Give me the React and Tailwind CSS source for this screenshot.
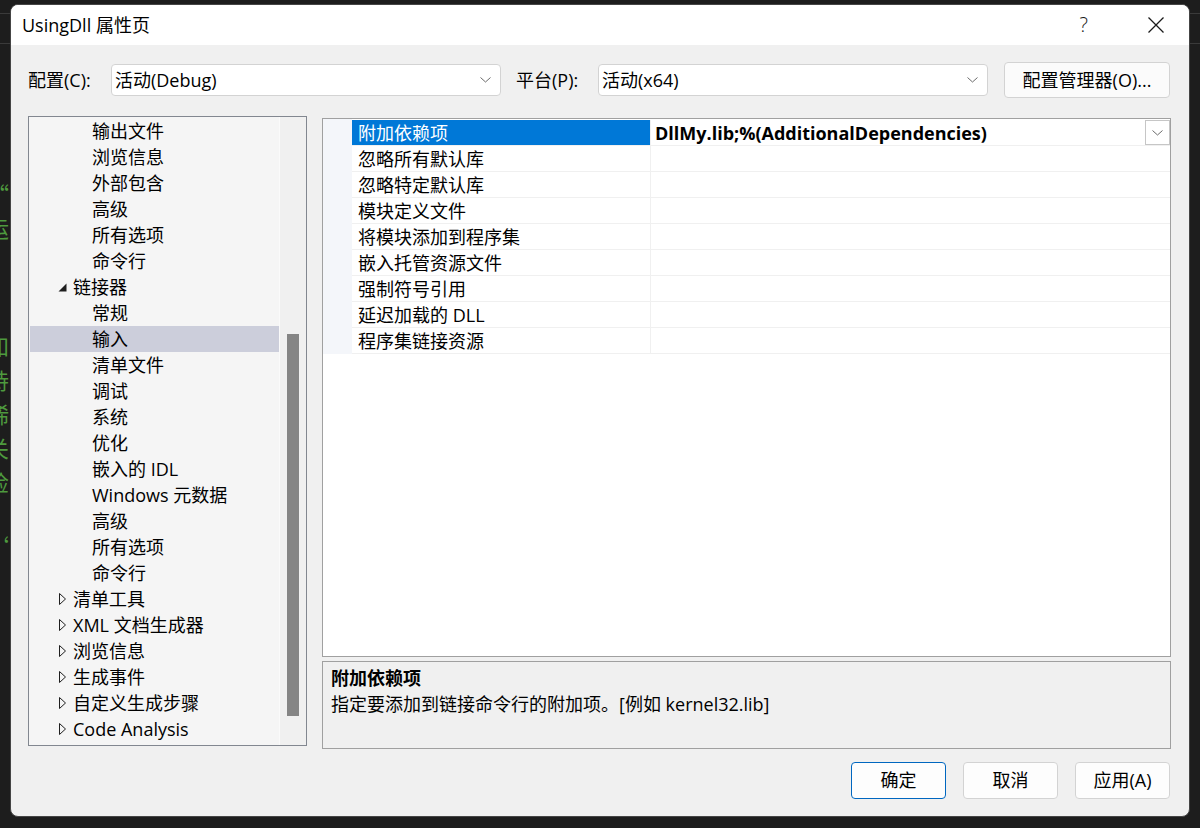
import React from 'react'

const font = { fontFamily: '"Open Sans", "Noto Sans CJK SC", sans-serif' }

const treeItems = [
  { t: '输出文件', l: 2 },
  { t: '浏览信息', l: 2 },
  { t: '外部包含', l: 2 },
  { t: '高级', l: 2 },
  { t: '所有选项', l: 2 },
  { t: '命令行', l: 2 },
  { t: '链接器', l: 1, open: true },
  { t: '常规', l: 2 },
  { t: '输入', l: 2, sel: true },
  { t: '清单文件', l: 2 },
  { t: '调试', l: 2 },
  { t: '系统', l: 2 },
  { t: '优化', l: 2 },
  { t: '嵌入的 IDL', l: 2 },
  { t: 'Windows 元数据', l: 2 },
  { t: '高级', l: 2 },
  { t: '所有选项', l: 2 },
  { t: '命令行', l: 2 },
  { t: '清单工具', l: 1 },
  { t: 'XML 文档生成器', l: 1 },
  { t: '浏览信息', l: 1 },
  { t: '生成事件', l: 1 },
  { t: '自定义生成步骤', l: 1 },
  { t: 'Code Analysis', l: 1 },
]

const props = [
  '附加依赖项',
  '忽略所有默认库',
  '忽略特定默认库',
  '模块定义文件',
  '将模块添加到程序集',
  '嵌入托管资源文件',
  '强制符号引用',
  '延迟加载的 DLL',
  '程序集链接资源',
]

// bits of the code editor showing behind the dialog
const bgGlyphs = [
  { t: '“', y: 182 },
  { t: '运', y: 216 },
  { t: '知', y: 334 },
  { t: '持', y: 368 },
  { t: '稀', y: 402 },
  { t: '关', y: 436 },
  { t: '检', y: 470 },
  { t: '‘', y: 534 },
]

function Chevron({ className = '' }) {
  return (
    <svg width="11" height="6" viewBox="0 0 11 6" className={className}>
      <polyline points="0.5,0.5 5.5,5 10.5,0.5" fill="none" stroke="#6b6b6b" strokeWidth="1" />
    </svg>
  )
}

function Combo({ value, width }) {
  return (
    <div className={`flex items-center h-[32px] bg-white border border-[#d3d3d3] rounded-[4px] pl-[3px] pr-[9px] ${width}`}>
      <span className="flex-1 pt-px">{value}</span>
      <Chevron />
    </div>
  )
}

function TreeRow({ item }) {
  return (
    <div className={`flex items-center h-[26px] leading-[26px] whitespace-nowrap ${item.sel ? 'bg-[#cccedb]' : ''} ${item.l === 2 ? 'pl-[62px]' : 'pl-[27px]'}`}>
      {item.l === 1 && (
        <span className="w-[16px] flex items-center">
          {item.open ? (
            <svg width="9" height="9" viewBox="0 0 9 9" className="ml-[1px] mt-[1px]">
              <polygon points="8.5,0.5 8.5,8.5 0.5,8.5" fill="#1e1e1e" />
            </svg>
          ) : (
            <svg width="8" height="12" viewBox="0 0 8 12" className="ml-[2px]">
              <polygon points="0.5,0.5 6.5,6 0.5,11.5" fill="none" stroke="#1e1e1e" strokeWidth="1" />
            </svg>
          )}
        </span>
      )}
      <span>{item.t}</span>
    </div>
  )
}

export default function App() {
  return (
    <div className="relative w-[1200px] h-[828px] bg-[#1d1d1d] overflow-hidden text-[18px] text-black" style={font}>
      {/* editor behind the dialog */}
      <div className="absolute left-0 right-0 top-[13px] h-px bg-[#3a3a3a]" />
      <div className="absolute left-0 right-0 top-[43px] h-px bg-[#3a3a3a]" />
      <div className="absolute left-[-13px] top-0 w-[24px] text-[22px] text-[#4e9a3e]" style={{ fontFamily: '"Noto Sans CJK SC", sans-serif' }}>
        <div className="absolute top-[86px] h-[14px] leading-[14px] text-[#c8a246] text-[16px]">v</div>
        {bgGlyphs.map((g, i) => (
          <div key={i} className="absolute h-[22px] leading-[22px]" style={{ top: g.y }}>
            {g.t}
          </div>
        ))}
      </div>

      {/* dialog window */}
      <div className="absolute left-[10px] top-[4px] w-[1180px] h-[813px] bg-[#f0f0f0] border border-[#454545] rounded-[8px] overflow-hidden flex flex-col">
        <div className="h-[40px] bg-white flex items-center pl-[11px] shrink-0">
          <span className="flex-1 text-[18px]">UsingDll 属性页</span>
          <span className="text-[20px] text-[#1a1a1a] mr-[60px] font-light">?</span>
          <svg width="16" height="16" viewBox="0 0 16 16" className="mr-[25px]">
            <path d="M0.5 0.5 L15.5 15.5 M15.5 0.5 L0.5 15.5" stroke="#1a1a1a" strokeWidth="1.3" />
          </svg>
        </div>

        <div className="flex flex-col pl-[17px]">
          {/* configuration row */}
          <div className="flex items-center h-[36px] mt-[17px]">
            <span className="w-[83px] pt-px">配置(C):</span>
            <Combo value="活动(Debug)" width="w-[390px]" />
            <span className="ml-[15px] w-[82px] pt-px">平台(P):</span>
            <Combo value="活动(x64)" width="w-[390px]" />
            <button className="ml-[16px] w-[166px] h-[36px] bg-[#fbfbfb] border border-[#d3d3d3] rounded-[4px]">
              配置管理器(O)...
            </button>
          </div>

          {/* main */}
          <div className="flex items-start mt-[18px] h-[632px]">
            {/* tree */}
            <div className="w-[279px] h-[630px] border border-[#828790] bg-[#f5f5f5] flex">
              <div className="flex-1 pt-px pl-px overflow-hidden">
                {treeItems.map((it, i) => (
                  <TreeRow key={i} item={it} />
                ))}
              </div>
              <div className="w-[27px] bg-[#f0f0f0] border-l border-[#fafafa] pt-[217px] pl-[7px]">
                <div className="w-[12px] h-[382px] bg-[#858585]" />
              </div>
            </div>

            <div className="ml-[15px] w-[849px] mt-[2px] flex flex-col">
              {/* property grid */}
              <div className="h-[539px] border border-[#a0a0a0] bg-white">
                <div className="flex">
                  <div className="w-[29px] bg-[#f4f6fa]" />
                  <div className="flex-1 pt-px">
                    {props.map((p, i) => (
                      <div key={i} className="flex h-[26px] border-b border-[#f0f0f0] leading-[26px]">
                        <div className={`w-[299px] pl-[6px] border-r border-[#f0f0f0] whitespace-nowrap ${i === 0 ? 'bg-[#0078d7] text-white' : ''}`}>
                          {p}
                        </div>
                        <div className="flex-1 flex items-center pl-[4px]">
                          {i === 0 && (
                            <>
                              <span className="flex-1 font-bold pt-px">DllMy.lib;%(AdditionalDependencies)</span>
                              <div className="w-[25px] h-[25px] border border-[#c6c6c6] bg-white flex items-center justify-center">
                                <Chevron />
                              </div>
                            </>
                          )}
                        </div>
                      </div>
                    ))}
                  </div>
                </div>
              </div>

              {/* description */}
              <div className="mt-[4px] h-[88px] border border-[#a0a0a0] bg-[#f0f0f0] pl-[8px] pt-[3px] leading-[26px]">
                <div className="font-bold">附加依赖项</div>
                <div>指定要添加到链接命令行的附加项。[例如 kernel32.lib]</div>
              </div>
            </div>
          </div>

          {/* footer */}
          <div className="flex justify-end gap-[17px] mt-[14px] pr-[19px]">
            <button className="w-[95px] h-[37px] bg-[#fdfdfd] border border-[#0067c0] rounded-[4px]">确定</button>
            <button className="w-[95px] h-[37px] bg-[#fdfdfd] border border-[#d3d3d3] rounded-[4px]">取消</button>
            <button className="w-[95px] h-[37px] bg-[#fdfdfd] border border-[#d3d3d3] rounded-[4px]">应用(A)</button>
          </div>
        </div>
      </div>
    </div>
  )
}
